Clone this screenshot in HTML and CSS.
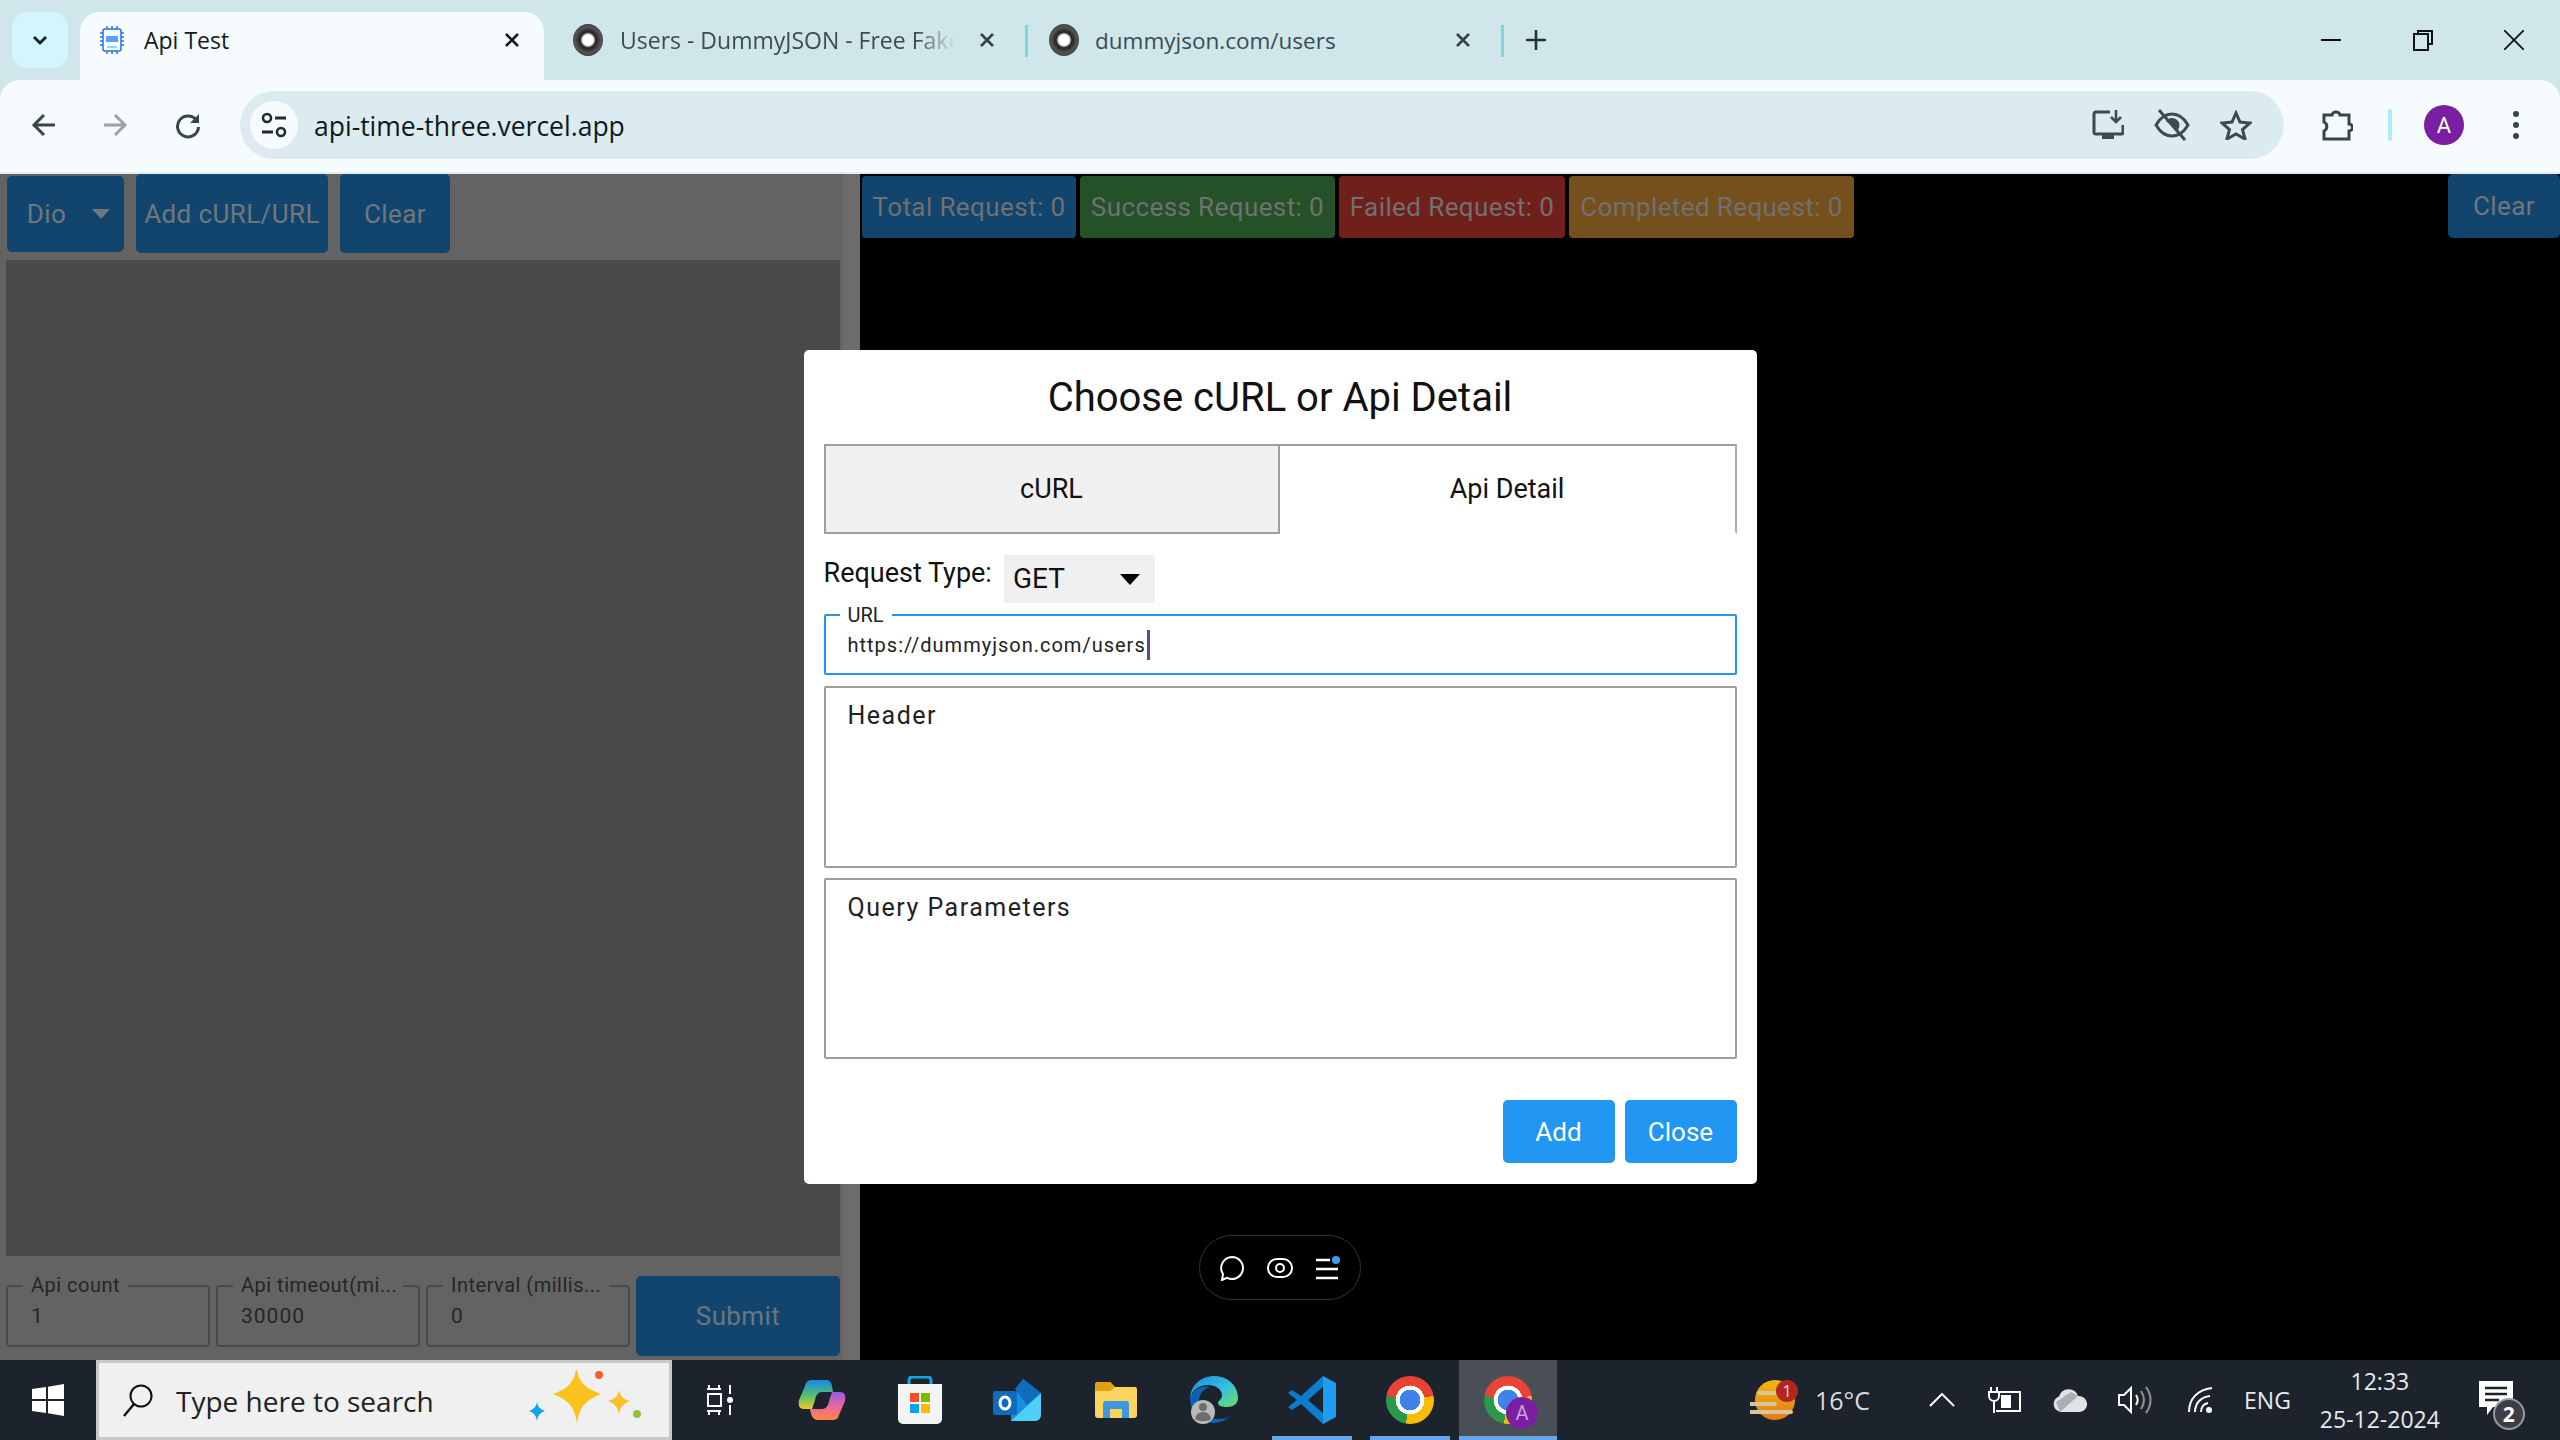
FILE: index.html
```html
<!DOCTYPE html>
<html lang="en">
<head>
    <meta charset="UTF-8">
    <title>Api Test</title>
    <link rel="stylesheet" href="styles.css">
</head>
<body>
    <header class="tabstrip">
        <div class="tab-search">
            <svg width="20" height="20" viewBox="0 0 20 20"><path d="M4 7l6 6 6-6" fill="none" stroke="#12262c" stroke-width="3"/></svg>
        </div>
        <div class="tab tab-active">
            <svg class="favicon" width="32" height="32" viewBox="0 0 32 32">
                <rect width="32" height="32" fill="#fff"/>
                <rect x="7" y="5" width="18" height="22" rx="2" fill="#fff" stroke="#1976f2" stroke-width="1.5"/>
                <path d="M4 9h3M4 13h3M4 17h3M4 21h3M25 9h3M25 13h3M25 17h3M25 21h3M11 2v3M16 2v3M21 2v3M11 27v3M16 27v3M21 27v3" stroke="#1976f2" stroke-width="1.500"/>
                <rect x="10" y="12" width="12" height="6" fill="#5aa0f5"/>
                <path d="M11 23h10" stroke="#7fc4f5" stroke-width="1.500"/>
            </svg>
            <span class="tab-title">Api Test</span>
            <svg class="tab-close" width="16" height="16" viewBox="0 0 16 16"><path d="M2 2l12 12M14 2L2 14" stroke="#0d1a1e" stroke-width="2.6"/></svg>
        </div>
        <div class="tab tab-second">
            <span class="ring-icon"></span>
            <span class="tab-title tab-title-clip">Users - DummyJSON - Free Fake</span>
            <svg class="tab-close" width="16" height="16" viewBox="0 0 16 16"><path d="M2 2l12 12M14 2L2 14" stroke="#2f4248" stroke-width="2.6"/></svg>
        </div>
        <div class="tab-sep"></div>
        <div class="tab tab-third">
            <span class="ring-icon"></span>
            <span class="tab-title tab-title-small">dummyjson.com/users</span>
            <svg class="tab-close" width="16" height="16" viewBox="0 0 16 16"><path d="M2 2l12 12M14 2L2 14" stroke="#2f4248" stroke-width="2.6"/></svg>
        </div>
        <div class="tab-sep"></div>
        <svg class="new-tab" width="22" height="22" viewBox="0 0 22 22"><path d="M11 1v20M1 11h20" stroke="#22343a" stroke-width="2.6"/></svg>
        <div class="win-controls">
            <svg width="20" height="20" viewBox="0 0 20 20"><path d="M0 10h20" stroke="#111" stroke-width="2"/></svg>
            <svg width="20" height="22" viewBox="0 0 20 22"><path d="M5 5V2h14v13h-4" fill="none" stroke="#111" stroke-width="2"/><rect x="1" y="5" width="14" height="16" fill="none" stroke="#111" stroke-width="2"/></svg>
            <svg width="20" height="20" viewBox="0 0 20 20"><path d="M0 0l20 20M20 0L0 20" stroke="#111" stroke-width="1.8"/></svg>
        </div>
    </header>

    <nav class="toolbar">
        <svg class="nav-icon nav-back" width="28" height="28" viewBox="0 0 28 28"><path d="M25 14H5M14 4L4 14l10 10" fill="none" stroke="#33474d" stroke-width="3"/></svg>
        <svg class="nav-icon nav-forward" width="28" height="28" viewBox="0 0 28 28"><path d="M3 14h20M14 4l10 10-10 10" fill="none" stroke="#9aa4a8" stroke-width="3"/></svg>
        <svg class="nav-icon nav-reload" width="28" height="28" viewBox="0 0 28 28"><path d="M23 10a10.5 10.5 0 1 0 1.5 6" fill="none" stroke="#33474d" stroke-width="3"/><path d="M25 3v9h-9z" fill="#33474d"/></svg>
        <div class="omnibox">
            <div class="site-chip">
                <svg width="26" height="28" viewBox="0 0 26 28"><circle cx="6" cy="7" r="4" fill="none" stroke="#1c2c30" stroke-width="2.6"/><path d="M14 7h11M1 21h11" stroke="#1c2c30" stroke-width="2.8"/><circle cx="20" cy="21" r="4" fill="none" stroke="#1c2c30" stroke-width="2.6"/></svg>
            </div>
            <span class="omni-url">api-time-three.vercel.app</span>
            <div class="omni-actions">
                <svg width="32" height="30" viewBox="0 0 32 30"><path d="M18 2H4a2 2 0 0 0-2 2v18a2 2 0 0 0 2 2h26a2 2 0 0 0 1-1V15" fill="none" stroke="#3d4a4e" stroke-width="3"/><path d="M10 24h12v5H10z" fill="#3d4a4e"/><path d="M24 0v11M19 7l5 5 5-5" fill="none" stroke="#3d4a4e" stroke-width="2.6"/></svg>
                <svg width="36" height="32" viewBox="0 0 36 32"><path d="M2 16c4-7 10-11 16-11s12 4 16 11c-4 7-10 11-16 11S6 23 2 16z" fill="none" stroke="#3d4a4e" stroke-width="3"/><path d="M12 12a7 7 0 0 1 12 9z" fill="#3d4a4e"/><path d="M5 1l26 30" stroke="#3d4a4e" stroke-width="3"/></svg>
                <svg width="32" height="30" viewBox="0 0 32 30"><path d="M16 3l4 9 10 1-7.500 6.500L25 29l-9-5-9 5 2.500-9.500L2 13l10-1z" fill="none" stroke="#3d4a4e" stroke-width="3"/></svg>
            </div>
        </div>
        <svg class="tool-puzzle" width="32" height="32" viewBox="0 0 32 32"><path d="M3 6h8a4 3 0 0 1 8 0h9v9a3 3 0 0 1 0 7v8H3v-8a5 5 0 0 0 0-9z" fill="none" stroke="#33474d" stroke-width="3"/></svg>
        <div class="tool-sep"></div>
        <div class="avatar">A</div>
        <svg class="tool-kebab" width="8" height="32" viewBox="0 0 8 32"><circle cx="4" cy="5" r="3" fill="#33474d"/><circle cx="4" cy="16" r="3" fill="#33474d"/><circle cx="4" cy="27" r="3" fill="#33474d"/></svg>
    </nav>

    <main class="page">
        <section class="left-panel">
            <div class="left-actions">
                <div class="btn-dim btn-dio">Dio <span class="caret-dim"></span></div>
                <div class="btn-dim btn-add">Add cURL/URL</div>
                <div class="btn-dim btn-clear">Clear</div>
            </div>
            <div class="editor-dim"></div>
            <div class="left-form">
                <div class="dim-field"><label>Api count</label>1</div>
                <div class="dim-field"><label>Api timeout(mi...</label>30000</div>
                <div class="dim-field"><label>Interval (millis...</label>0</div>
                <div class="btn-dim btn-submit">Submit</div>
            </div>
        </section>
        <div class="splitter"></div>
        <section class="right-panel">
            <div class="stat stat-total">Total Request: 0</div>
            <div class="stat stat-success">Success Request: 0</div>
            <div class="stat stat-failed">Failed Request: 0</div>
            <div class="stat stat-completed">Completed Request: 0</div>
            <div class="btn-dim btn-clear-right">Clear</div>
        </section>

        <div class="overlay">
            <div class="dialog">
                <h1>Choose cURL or Api Detail</h1>
                <div class="dialog-tabs">
                    <div class="dialog-tab dialog-tab-off">cURL</div>
                    <div class="dialog-tab dialog-tab-on">Api Detail</div>
                </div>
                <div class="request-row">
                    <span class="request-label">Request Type:</span>
                    <div class="request-select"><span class="request-value">GET</span> <span class="caret"></span></div>
                </div>
                <div class="url-field">
                    <label>URL</label>
                    <span class="url-text">https://dummyjson.com/users</span><span class="text-caret"></span>
                </div>
                <div class="text-box text-box-header">Header</div>
                <div class="text-box text-box-query">Query Parameters</div>
                <div class="dialog-actions">
                    <div class="btn-primary">Add</div>
                    <div class="btn-primary">Close</div>
                </div>
            </div>
        </div>

        <div class="float-pill">
            <svg width="26" height="26" viewBox="0 0 26 26"><path d="M13 2a11 11 0 1 1-5 20.800L3 25l1-6A11 11 0 0 1 13 2z" fill="none" stroke="#fff" stroke-width="2"/></svg>
            <svg width="26" height="20" viewBox="0 0 26 20"><rect x="1" y="1" width="24" height="18" rx="9" fill="none" stroke="#fff" stroke-width="2"/><circle cx="13" cy="10" r="4" fill="none" stroke="#fff" stroke-width="2"/></svg>
            <svg width="26" height="24" viewBox="0 0 26 24"><path d="M1 4h14M1 13h22M1 22h22" stroke="#fff" stroke-width="2.400"/><circle cx="21" cy="4" r="4" fill="#3f9cf0"/></svg>
        </div>
    </main>

    <footer class="taskbar">
        <div class="start-btn">
            <svg width="32" height="32" viewBox="0 0 32 32"><path d="M0 5l14-2v12H0zM16 2.700L32 0v15H16zM0 17h14v12L0 27zM16 17h16v15l-16-2.700z" fill="#fff"/></svg>
        </div>
        <div class="search-box">
            <svg width="34" height="34" viewBox="0 0 34 34"><circle cx="20" cy="13" r="10.500" fill="none" stroke="#111" stroke-width="2"/><path d="M13 21L3 33" stroke="#111" stroke-width="2.400"/></svg>
            <span class="search-text">Type here to search</span>
            <svg class="sparkles" width="124" height="60" viewBox="0 0 124 60">
                <path d="M52 0c2 12 8 18 24 24-16 6-22 14-24 30-2-16-8-24-24-30 16-6 22-12 24-30z" fill="#fdc21e"/>
                <path d="M94 20c1 6 4 9 11 11-7 3-10 6-11 14-1-8-4-11-11-14 7-2 10-5 11-11z" fill="#fcc02a"/>
                <path d="M12 32c1 5 3 7 8 9-5 2-7 4-8 10-1-6-3-8-8-10 5-2 7-4 8-9z" fill="#0ea5ee"/>
                <ellipse cx="74" cy="5" rx="4" ry="4" fill="#f4622a"/>
                <ellipse cx="112" cy="44" rx="4" ry="4" fill="#92c43a"/>
            </svg>
        </div>
        <div class="task-items">
            <div class="task-item">
                <svg width="32" height="32" viewBox="0 0 32 32"><path d="M4 5h14M6 1v4M16 1v4M4 27h14M6 27v4M16 27v4" fill="none" stroke="#fff" stroke-width="2"/><rect x="5" y="10" width="13" height="12" fill="none" stroke="#fff" stroke-width="2"/><path d="M27 1v9M27 21v10" stroke="#fff" stroke-width="2"/><circle cx="27" cy="16" r="3" fill="#fff"/></svg>
            </div>
            <div class="task-item">
                <svg width="48" height="44" viewBox="0 0 48 44">
                    <defs>
                        <linearGradient id="cpA" x1="0" y1="0" x2="0" y2="1"><stop offset="0" stop-color="#1489e8"/><stop offset=".55" stop-color="#5ac06a"/><stop offset="1" stop-color="#f4c82c"/></linearGradient>
                        <linearGradient id="cpB" x1="0" y1="0" x2="0" y2="1"><stop offset="0" stop-color="#9a5ce0"/><stop offset=".6" stop-color="#f06a92"/><stop offset="1" stop-color="#fb8a3a"/></linearGradient>
                    </defs>
                    <path d="M14 2h14c6 0 6 6 7 12H24c-4 0-6 3-7 8l-3 9H6c-5 0-6-4-5-9L7 8c1-4 3-6 7-6z" fill="url(#cpA)"/>
                    <path d="M34 42H20c-6 0-7-6-8-11h12c4 0 6-3 7-8l3-9h8c5 0 6 4 5 9l-6 14c-1 4-3 5-7 5z" fill="url(#cpB)"/>
                </svg>
            </div>
            <div class="task-item">
                <svg width="46" height="48" viewBox="0 0 46 48">
                    <path d="M12 8V4a3 3 0 0 1 3-3h16a3 3 0 0 1 3 3v4" fill="none" stroke="#11a6e8" stroke-width="3"/>
                    <path d="M1 8h44v35a5 5 0 0 1-5 5H6a5 5 0 0 1-5-5z" fill="#f4f4f4"/>
                    <rect x="13" y="17" width="9" height="9" fill="#f25022"/><rect x="24" y="17" width="9" height="9" fill="#7fba00"/>
                    <rect x="13" y="28" width="9" height="9" fill="#00a4ef"/><rect x="24" y="28" width="9" height="9" fill="#ffb900"/>
                </svg>
            </div>
            <div class="task-item">
                <svg width="50" height="42" viewBox="0 0 50 42">
                    <path d="M30 0l18 14v22a6 6 0 0 1-6 6H18V22z" fill="#1a8fe0"/>
                    <path d="M48 14v22a6 6 0 0 1-6 6H18z" fill="#4fd0fb"/>
                    <path d="M22 10L30 0l18 14-14 12z" fill="#0f6cbd"/>
                    <rect x="0" y="12" width="24" height="24" rx="2" fill="#0f6cbd"/>
                    <ellipse cx="12" cy="24" rx="5" ry="6" fill="none" stroke="#fff" stroke-width="3"/>
                </svg>
            </div>
            <div class="task-item">
                <svg width="42" height="36" viewBox="0 0 42 36">
                    <path d="M0 3a3 3 0 0 1 3-3h12l5 5h20a2 2 0 0 1 2 2v26a3 3 0 0 1-3 3H3a3 3 0 0 1-3-3z" fill="#fcd35c"/>
                    <path d="M0 3a3 3 0 0 1 3-3h12l5 5-5 4H0z" fill="#dfa112"/>
                    <path d="M8 36V22a3 3 0 0 1 3-3h20a3 3 0 0 1 3 3v14h-7v-9H15v9z" fill="#3d97df"/>
                </svg>
            </div>
            <div class="task-item">
                <svg width="48" height="48" viewBox="0 0 48 48">
                    <defs><linearGradient id="edgeA" x1="0" y1="0" x2="1" y2="1"><stop offset="0" stop-color="#1a8ad8"/><stop offset=".55" stop-color="#35c1e0"/><stop offset="1" stop-color="#6fdc5e"/></linearGradient></defs>
                    <path d="M24 0c14 0 24 10 24 22 0 6-5 9-11 9-5 0-9-1-9-4 0-3 4-3 4-8 0-6-7-10-14-10C9 9 2 14 0 22 1 9 11 0 24 0z" fill="url(#edgeA)"/>
                    <path d="M0 22c3-9 12-13 20-11-8 2-12 9-11 17 1 9 9 15 20 15 5 0 9-1 12-3-4 3-10 7-18 7C10 47 0 36 0 22z" fill="#0c62b4"/>
                    <ellipse cx="13" cy="36" rx="12" ry="12" fill="#b9b9b9"/>
                    <circle cx="13" cy="31" r="4" fill="#6d6d6d"/><path d="M5 43c1-5 4-7 8-7s7 2 8 7c-4 3-12 3-16 0z" fill="#6d6d6d"/>
                </svg>
            </div>
            <div class="task-item task-open">
                <svg width="50" height="48" viewBox="0 0 50 48">
                    <path d="M36 0l13 7v34l-13 7z" fill="#1f9cf0"/>
                    <path d="M36 0L14 20 5 14l-4 3 9 7-9 7 4 3 9-6 22 20 0-11-15-13 15-13z" fill="#0d7ccb"/>
                </svg>
            </div>
            <div class="task-item task-open">
                <span class="chrome-logo"></span>
            </div>
            <div class="task-item task-open task-current">
                <span class="chrome-logo"></span>
                <span class="chrome-badge">A</span>
            </div>
        </div>
        <div class="tray">
            <div class="weather">
                <svg width="50" height="40" viewBox="0 0 50 40">
                    <defs><linearGradient id="sunA" x1="0" y1="0" x2="0" y2="1"><stop offset="0" stop-color="#f2b90c"/><stop offset="1" stop-color="#e6761a"/></linearGradient></defs>
                    <ellipse cx="25" cy="20" rx="20" ry="20" fill="url(#sunA)"/>
                    <path d="M9 13h22M1 24h24M1 32h40" stroke="#d6c79a" stroke-width="4" stroke-linecap="round"/>
                    <circle cx="37" cy="11" r="11" fill="#b3261e"/>
                    <text x="37" y="17" class="weather-count">1</text>
                </svg>
                <span class="temp">16°C</span>
            </div>
            <svg class="tray-chevron" width="26" height="14" viewBox="0 0 26 14"><path d="M1 13L13 1l12 12" fill="none" stroke="#fff" stroke-width="2"/></svg>
            <svg class="tray-battery" width="34" height="26" viewBox="0 0 34 26"><path d="M3 0v5M9 0v5M1 5h10v4a5 5 0 0 1-10 0zM6 14v12" fill="none" stroke="#fff" stroke-width="2"/><path d="M10 5h22v19H8" fill="none" stroke="#fff" stroke-width="2"/><rect x="13" y="8" width="10" height="13" fill="#fff"/></svg>
            <svg class="tray-cloud" width="34" height="24" viewBox="0 0 34 24"><path d="M8 24a8 8 0 0 1-2-15.500A10 10 0 0 1 25 8a8 8 0 0 1 2 16z" fill="#dfe3e6"/><path d="M3 14L18 4l7 4-18 16z" fill="#aab0b4"/></svg>
            <svg class="tray-speaker" width="34" height="28" viewBox="0 0 34 28"><path d="M1 9h5l7-7v24l-7-7H1z" fill="none" stroke="#fff" stroke-width="2"/><path d="M18 9c2 3 2 7 0 10" fill="none" stroke="#fff" stroke-width="2"/><path d="M23 5c4 6 4 12 0 18M28 1c6 8 6 18 0 26" fill="none" stroke="#8f9498" stroke-width="2"/></svg>
            <svg class="tray-wifi" width="26" height="26" viewBox="0 0 26 26"><path d="M1 25C1 12 9 3 24 1M7 25c0-9 6-15 15-16M13 25c0-5 3-8 7-9" fill="none" stroke="#fff" stroke-width="2"/><circle cx="21" cy="23" r="3" fill="#fff"/></svg>
            <span class="tray-lang">ENG</span>
            <div class="tray-clock"><span>12:33</span><span>25-12-2024</span></div>
            <div class="tray-notify">
                <svg width="34" height="36" viewBox="0 0 34 36"><path d="M0 0h34v26H14l-6 8v-8H0z" fill="#fff"/><path d="M6 7h22M6 13h22M6 19h14" stroke="#1c232c" stroke-width="2.400"/></svg>
                <span class="notify-badge">2</span>
            </div>
        </div>
    </footer>
</body>
</html>
```

FILE: styles.css
```css
* {
    box-sizing: border-box;
}
html, body {
    margin: 0;
    padding: 0;
}
body {
    width: 2560px;
    height: 1440px;
    display: flex;
    flex-direction: column;
    overflow: hidden;
    font-family: Roboto, sans-serif;
    background: #cfe7eb;
}

/* browser tabs */
.tabstrip {
    height: 80px;
    flex: none;
    display: flex;
    align-items: flex-end;
    background: #cfe7eb;
    font-family: "Open Sans", sans-serif;
    color: #3b4c52;
}
.tab-search {
    width: 56px;
    height: 56px;
    margin: 0 12px 12px 12px;
    border-radius: 16px;
    background: #d3f6fd;
    display: flex;
    align-items: center;
    justify-content: center;
}
.tab {
    height: 68px;
    display: flex;
    align-items: center;
    padding-bottom: 12px;
    font-size: 23px;
}
.tab-active {
    width: 464px;
    padding-left: 16px;
    padding-right: 24px;
    margin-right: 29px;
    background: #f6fbfe;
    border-radius: 20px 20px 0 0;
    color: #111c20;
}
.tab-title {
    margin-left: 16px;
    white-space: nowrap;
    flex: 1;
    overflow: hidden;
}
.tab-title-clip {
    margin-left: 17px;
    margin-right: 24px;
    -webkit-mask-image: linear-gradient(to right, #000 88%, transparent 100%);
    mask-image: linear-gradient(to right, #000 88%, transparent 100%);
}
.tab-title-small {
    font-size: 22.5px;
}
.tab-close {
    flex: none;
}
.tab-second {
    width: 452px;
    padding-right: 30px;
}
.tab-third {
    width: 473px;
    padding-left: 21px;
    padding-right: 30px;
}
.tab-sep {
    width: 3px;
    height: 32px;
    margin-bottom: 23px;
    background: #7fd3e2;
    flex: none;
}
.ring-icon {
    width: 30px;
    height: 32px;
    flex: none;
    border-radius: 50%;
    background: radial-gradient(circle, #fff 0 24%, #222 36%, #555 60%, #222 88%, #ddd 100%);
}
.new-tab {
    margin: 0 0 29px 21px;
}
.win-controls {
    margin-left: auto;
    width: 239px;
    padding: 0 36px 0 0;
    height: 80px;
    display: flex;
    align-items: center;
    justify-content: space-between;
    align-self: flex-start;
}

/* address bar */
.toolbar {
    height: 94px;
    flex: none;
    display: flex;
    align-items: center;
    padding-bottom: 2px;
    background: #f6fbfe;
    border-bottom: 2px solid #e4ecef;
    border-radius: 20px 20px 0 0;
}
.nav-back {
    margin-left: 30px;
}
.nav-forward {
    margin-left: 43px;
}
.nav-reload {
    margin-left: 45px;
}
.omnibox {
    width: 2044px;
    height: 68px;
    margin-left: 38px;
    display: flex;
    align-items: center;
    padding-left: 10px;
    background: #dcebf0;
    border-radius: 34px;
}
.site-chip {
    width: 48px;
    height: 48px;
    border-radius: 50%;
    background: #f6fbfe;
    display: flex;
    align-items: center;
    justify-content: center;
}
.omni-url {
    margin-left: 16px;
    padding-top: 1px;
    font-family: "Open Sans", sans-serif;
    font-size: 26.5px;
    color: #10191c;
}
.omni-actions {
    margin-left: auto;
    display: flex;
    align-items: center;
    gap: 30px;
    padding-right: 32px;
}
.tool-puzzle {
    margin-left: 37px;
}
.tool-sep {
    width: 4px;
    height: 32px;
    margin-left: 35px;
    border-radius: 2px;
    background: #a8ecfb;
}
.avatar {
    width: 40px;
    height: 40px;
    margin-left: 32px;
    border-radius: 50%;
    background: #7b1fa2;
    color: #fff;
    font-size: 22px;
    display: flex;
    align-items: center;
    justify-content: center;
}
.tool-kebab {
    margin-left: 48px;
}

/* app page behind the dialog */
.page {
    position: relative;
    flex: 1;
    display: flex;
    min-height: 0;
}
.left-panel {
    width: 843px;
    padding: 0 3px 0 6px;
    display: flex;
    flex-direction: column;
    background: #636363;
}
.left-actions {
    height: 86px;
    flex: none;
    display: flex;
    gap: 12px;
    padding-left: 1px;
}
.btn-dim {
    display: flex;
    align-items: center;
    justify-content: center;
    background: #11456e;
    color: #70777c;
    font-size: 26px;
    letter-spacing: 0.4px;
    border-radius: 5px;
}
.btn-dio {
    width: 117px;
    height: 76px;
    margin-top: 2px;
    gap: 26px;
    padding-left: 6px;
}
.caret-dim {
    width: 0;
    height: 0;
    border-left: 9px solid transparent;
    border-right: 9px solid transparent;
    border-top: 10px solid #70777c;
}
.btn-add {
    width: 192px;
    height: 79px;
}
.btn-clear {
    width: 110px;
    height: 79px;
}
.editor-dim {
    flex: 1;
    background: #4a4a4a;
}
.left-form {
    height: 104px;
    flex: none;
    display: grid;
    grid-template-columns: repeat(4, 204px);
    gap: 6px;
    padding-top: 20px;
}
.dim-field {
    position: relative;
    height: 62px;
    margin-top: 9px;
    padding: 17px 0 0 23px;
    border: 2px solid #4a4a4a;
    border-radius: 4px;
    color: #262626;
    font-size: 21px;
    letter-spacing: 1px;
}
.dim-field label {
    position: absolute;
    top: -14px;
    left: 15px;
    padding: 0 8px;
    max-width: 170px;
    background: #636363;
    font-size: 20px;
    letter-spacing: 0.5px;
    white-space: nowrap;
}
.btn-submit {
    height: 80px;
    color: #6a7680;
}
.splitter {
    width: 17px;
    background: #6e6b6c;
}
.right-panel {
    flex: 1;
    display: flex;
    align-items: flex-start;
    gap: 4px;
    padding-left: 2px;
    background: #000;
}
.stat {
    height: 62px;
    margin-top: 2px;
    display: flex;
    align-items: center;
    justify-content: center;
    color: #70716f;
    font-size: 26px;
    letter-spacing: 0.4px;
    border-radius: 4px;
}
.stat-total {
    width: 214px;
    background: #11456e;
}
.stat-success {
    width: 255px;
    background: #245127;
}
.stat-failed {
    width: 226px;
    background: #6f201b;
}
.stat-completed {
    width: 285px;
    background: #75501c;
}
.btn-clear-right {
    width: 112px;
    height: 64px;
    margin-left: auto;
}

/* dialog */
.overlay {
    position: absolute;
    inset: 0;
    display: flex;
    align-items: center;
    justify-content: center;
}
.dialog {
    width: 953px;
    height: 834px;
    padding: 0 20px;
    background: #fff;
    border-radius: 5px;
    display: flex;
    flex-direction: column;
}
.dialog h1 {
    height: 94px;
    margin: 0;
    flex: none;
    display: flex;
    align-items: center;
    justify-content: center;
    font-size: 40px;
    font-weight: 400;
    color: #111;
}
.dialog-tabs {
    height: 90px;
    flex: none;
    display: grid;
    grid-template-columns: 456px 1fr;
    font-size: 27px;
    color: #111;
}
.dialog-tab {
    display: flex;
    align-items: center;
    justify-content: center;
    border-top: 2px solid #9e9e9e;
    border-right: 2px solid #9e9e9e;
}
.dialog-tab-off {
    background: #f0f0f0;
    border-left: 2px solid #9e9e9e;
    border-bottom: 2px solid #9e9e9e;
}
.dialog-tab-on {
    border-bottom: 2px solid transparent;
    border-right-color: #b0b0b0;
    background-clip: padding-box;
}
.request-row {
    height: 48px;
    margin-top: 21px;
    flex: none;
    display: flex;
    font-size: 27px;
    color: #111;
}
.request-label {
    line-height: 37px;
}
.request-select {
    width: 151px;
    margin-left: 12px;
    padding: 0 15px 0 9px;
    background: #f0f0f0;
    display: flex;
    align-items: center;
    justify-content: space-between;
    font-size: 28px;
}
.request-value {
    margin-top: -2px;
}
.caret {
    width: 0;
    height: 0;
    border-left: 10px solid transparent;
    border-right: 10px solid transparent;
    border-top: 11px solid #000;
}
.url-field {
    position: relative;
    height: 61px;
    margin-top: 11px;
    flex: none;
    display: flex;
    align-items: center;
    padding-left: 22px;
    border: 2px solid #2196f3;
    border-radius: 2px;
    font-size: 20px;
    letter-spacing: 1px;
    color: #222;
}
.url-field label {
    position: absolute;
    top: -13px;
    left: 14px;
    padding: 0 8px;
    background: #fff;
    font-size: 20px;
    letter-spacing: 0;
    color: #222;
}
.text-caret {
    width: 3px;
    height: 30px;
    margin-left: 1px;
    background: #5c4a90;
}
.text-box {
    flex: none;
    padding: 13px 22px;
    border: 2px solid #9e9e9e;
    border-radius: 2px;
    font-size: 25px;
    letter-spacing: 1.500px;
    color: #222;
}
.text-box-header {
    height: 182px;
    margin-top: 11px;
}
.text-box-query {
    height: 181px;
    margin-top: 10px;
}
.dialog-actions {
    margin-top: 41px;
    display: flex;
    justify-content: flex-end;
    gap: 10px;
}
.btn-primary {
    width: 112px;
    height: 63px;
    display: flex;
    align-items: center;
    justify-content: center;
    background: #2196f3;
    border-radius: 5px;
    color: #fff;
    font-size: 26px;
}
.float-pill {
    position: absolute;
    left: 1199px;
    bottom: 60px;
    width: 162px;
    height: 65px;
    padding: 0 19px;
    display: flex;
    align-items: center;
    justify-content: space-between;
    border: 1px solid #333;
    border-radius: 33px;
    background: #000;
}

/* windows taskbar */
.taskbar {
    height: 80px;
    flex: none;
    display: flex;
    align-items: center;
    background: #1c232c;
    color: #fff;
}
.start-btn {
    width: 96px;
    display: flex;
    justify-content: center;
}
.search-box {
    width: 576px;
    height: 80px;
    display: flex;
    align-items: center;
    padding-left: 22px;
    background: #f0f0f0;
    border: 3px solid #c8c8c8;
    font-family: "Open Sans", sans-serif;
    font-size: 28px;
    color: #222;
}
.search-text {
    margin-left: 21px;
    padding-top: 2px;
}
.sparkles {
    margin-left: auto;
    margin-right: 20px;
}
.task-items {
    height: 80px;
    display: flex;
}
.task-item {
    position: relative;
    width: 98px;
    display: flex;
    align-items: center;
    justify-content: center;
}
.task-item:first-child {
    width: 94px;
    margin-right: 7px;
}
.task-open::after {
    content: "";
    position: absolute;
    left: 9px;
    right: 9px;
    bottom: 0;
    height: 4px;
    background: #64a8e8;
}
.task-current {
    background: #4a4e56;
}
.task-current::after {
    left: 0;
    right: 0;
}
.chrome-logo {
    width: 48px;
    height: 48px;
    border-radius: 50%;
    background:
        radial-gradient(circle, #3f83ea 0 30%, #fff 31% 42%, transparent 43%),
        conic-gradient(#ea4335 0 80deg, #fbbc04 80deg 190deg, #2a9a4a 190deg 280deg, #ea4335 280deg);
}
.chrome-badge {
    position: absolute;
    left: 47px;
    top: 37px;
    width: 32px;
    height: 32px;
    border-radius: 50%;
    background: #7b1fa2;
    color: #c9a4d8;
    font-size: 20px;
    display: flex;
    align-items: center;
    justify-content: center;
}
.tray {
    flex: 1;
    height: 80px;
    display: flex;
    align-items: center;
    font-family: "Open Sans", sans-serif;
}
.weather {
    display: flex;
    align-items: center;
    margin-left: 193px;
}
.weather-count {
    fill: #f2d6d0;
    font-size: 17px;
    text-anchor: middle;
}
.temp {
    margin-left: 15px;
    font-size: 25px;
    color: #d9dcdf;
}
.tray-chevron {
    margin-left: 59px;
}
.tray-battery {
    margin-left: 33px;
}
.tray-cloud {
    margin-left: 31px;
}
.tray-speaker {
    margin-left: 31px;
}
.tray-wifi {
    margin-left: 36px;
}
.tray-lang {
    margin-left: 30px;
    font-size: 23px;
    color: #e8eaec;
}
.tray-clock {
    width: 124px;
    margin-left: 27px;
    display: flex;
    flex-direction: column;
    align-items: center;
    gap: 6px;
    font-size: 23px;
    color: #e8eaec;
}
.tray-notify {
    position: relative;
    margin-left: 37px;
    padding-top: 2px;
}
.notify-badge {
    position: absolute;
    left: 14px;
    top: 19px;
    width: 32px;
    height: 32px;
    border-radius: 50%;
    border: 2px solid #9a9a9a;
    background: #3a3f45;
    font-size: 21px;
    font-weight: 700;
    display: flex;
    align-items: center;
    justify-content: center;
}
```
